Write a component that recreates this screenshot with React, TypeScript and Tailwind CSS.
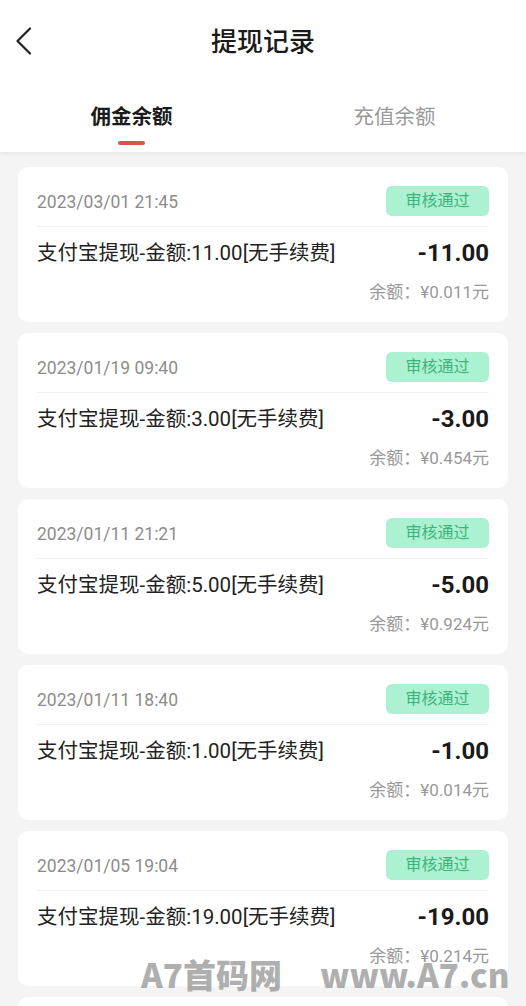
import React from "react";

type Record = {
  time: string;
  amount: string;
  balance: string;
};

const records: Record[] = [
  { time: "2023/03/01 21:45", amount: "11.00", balance: "0.011" },
  { time: "2023/01/19 09:40", amount: "3.00", balance: "0.454" },
  { time: "2023/01/11 21:21", amount: "5.00", balance: "0.924" },
  { time: "2023/01/11 18:40", amount: "1.00", balance: "0.014" },
  { time: "2023/01/05 19:04", amount: "19.00", balance: "0.214" },
  { time: "2023/01/02 10:12", amount: "2.00", balance: "0.233" },
];

const RecordCard: React.FC<{ item: Record }> = ({ item }) => {
  return (
    <div className="shrink-0 bg-white rounded-[10px] px-[19px] pt-[19px] pb-[18px]">
      <div className="flex items-center justify-between h-[30px]">
        <span className="text-[17.5px] text-[#8c8c8c] pt-[2px]">{item.time}</span>
        <span className="h-[30px] w-[103px] rounded-[6px] bg-[#adf1d3] text-[#3cb479] text-[16px] flex items-center justify-center">
          审核通过
        </span>
      </div>
      <div className="mt-[10px] border-t border-[#f2f2f2]" />
      <div className="mt-[13px] flex items-center justify-between h-[26px]">
        <span className="text-[20.5px] text-[#222]">
          支付宝提现-金额:{item.amount}[无手续费]
        </span>
        <span className="text-[24px] font-bold text-[#1a1a1a]">-{item.amount}</span>
      </div>
      <div className="mt-[16px] h-[22px] flex items-center justify-end text-[17px] text-[#999]">
        余额：¥{item.balance}元
      </div>
    </div>
  );
};

const App: React.FC = () => {
  return (
    <div className="relative h-[1006px] overflow-hidden bg-[#f4f4f4] font-['Roboto','Noto_Sans_CJK_SC',sans-serif]">
      <div className="relative z-10 bg-white shadow-[0_2px_6px_rgba(0,0,0,0.06)]">
        <div className="relative h-[84px] flex items-center justify-center">
          <svg
            className="absolute left-[14px] top-[27px]"
            width="20"
            height="28"
            viewBox="0 0 20 28"
            fill="none"
          >
            <path d="M16 1.5L3.5 14L16 26.5" stroke="#222" strokeWidth="2.2" strokeLinecap="round" strokeLinejoin="round" />
          </svg>
          <h1 className="text-[26px] font-medium text-[#1a1a1a]">提现记录</h1>
        </div>
        <div className="h-[68px] grid grid-cols-2">
          <div className="flex flex-col items-center pt-[19px]">
            <span className="text-[20.5px] leading-[28px] font-bold text-[#1a1a1a]">佣金余额</span>
            <span className="mt-[10px] h-[4px] w-[27px] rounded-full bg-[#d9534f]" />
          </div>
          <div className="flex flex-col items-center pt-[19px]">
            <span className="text-[20.5px] leading-[28px] text-[#999]">充值余额</span>
          </div>
        </div>
      </div>

      <div className="flex flex-col gap-[11px] px-[18px] pt-[15px]">
        {records.map((r, i) => (
          <RecordCard key={i} item={r} />
        ))}
      </div>

      <div className="absolute left-[141px] top-[950px] flex items-center gap-[38px] text-[33px] font-black text-[#999]/80 font-['Noto_Sans_CJK_SC',sans-serif] pointer-events-none">
        <span>A7首码网</span>
        <span>www.A7.cn</span>
      </div>
    </div>
  );
};

export default App;
